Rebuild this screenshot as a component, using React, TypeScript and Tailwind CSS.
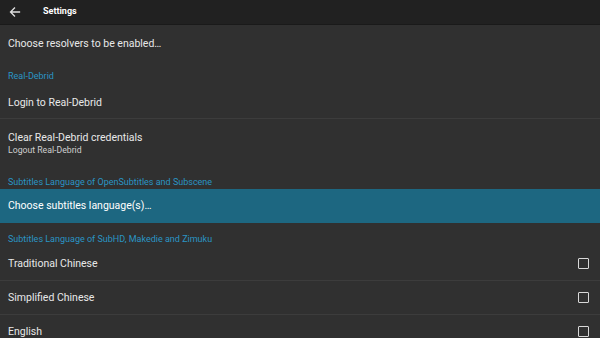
import React from "react";

const font = { fontFamily: "Roboto, 'Noto Sans', sans-serif" };

function Check() {
  return <div className="w-[11px] h-[11px] border-[1.5px] border-[#d8d8d8] rounded-[1px]" />;
}

function Divider() {
  return <div className="h-px bg-[#3c3c3c]" />;
}

export default function App() {
  return (
    <div className="w-[600px] h-[338px] overflow-hidden bg-[#303030] text-[#e8e8e8]" style={font}>
      <div className="h-[25px] bg-[#212121] flex items-center border-b border-[#1a1a1a]">
        <svg className="ml-[9px]" width="12" height="12" viewBox="0 0 24 24" fill="none" stroke="#e0e0e0" strokeWidth="2.6" strokeLinecap="square">
          <path d="M21 12H4M11 4l-8 8 8 8" />
        </svg>
        <span className="ml-[22px] text-[9px] font-bold text-white">Settings</span>
      </div>
      <div className="h-[38px] flex items-center px-2 text-[10.5px]">Choose resolvers to be enabled…</div>
      <div className="h-[25px] flex items-center pt-[2px] px-2 text-[9px] text-[#2a95c4]">Real-Debrid</div>
      <div className="h-[30px] flex items-center px-2 text-[10.5px]">Login to Real-Debrid</div>
      <Divider />
      <div className="h-[44px] flex flex-col justify-center px-2 pt-[4px]">
        <div className="text-[10.5px] leading-[13px]">Clear Real-Debrid credentials</div>
        <div className="text-[8.7px] leading-[12px] text-[#cfcfcf]">Logout Real-Debrid</div>
      </div>
      <div className="h-[26px] flex items-end pb-[0px] px-2 text-[9px] text-[#2a95c4]">Subtitles Language of OpenSubtitles and Subscene</div>
      <div className="h-[34px] flex items-center px-2 text-[10.5px] bg-[#1d6781] text-white">Choose subtitles language(s)…</div>
      <div className="h-[24px] flex items-end pb-[1px] px-2 text-[9px] text-[#2a95c4]">Subtitles Language of SubHD, Makedie and Zimuku</div>
      <div className="h-[33px] flex items-center justify-between px-2 pr-[11px] text-[10.5px]">
        <span>Traditional Chinese</span>
        <Check />
      </div>
      <Divider />
      <div className="h-[33px] flex items-center justify-between px-2 pr-[11px] text-[10.5px]">
        <span>Simplified Chinese</span>
        <Check />
      </div>
      <Divider />
      <div className="h-[33px] flex items-center justify-between px-2 pr-[11px] text-[10.5px]">
        <span>English</span>
        <Check />
      </div>
    </div>
  );
}
